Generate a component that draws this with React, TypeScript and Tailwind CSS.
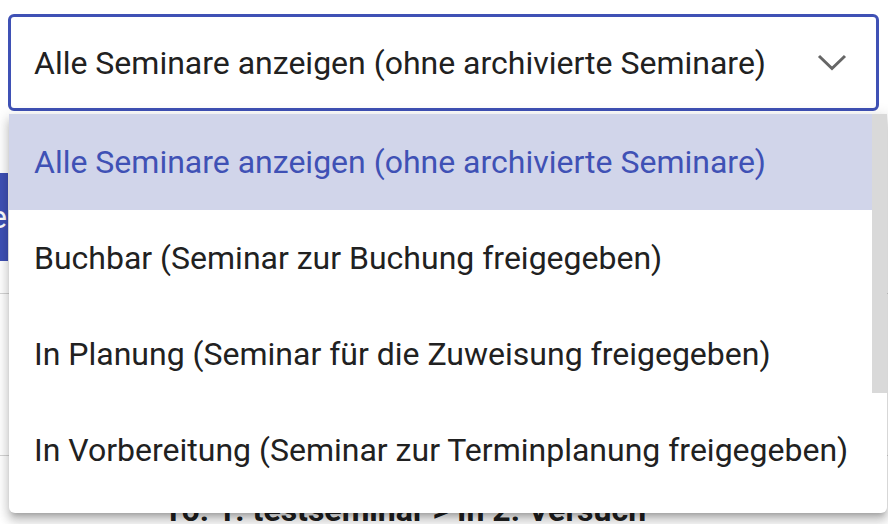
import React from 'react';

const options = [
  'Alle Seminare anzeigen (ohne archivierte Seminare)',
  'Buchbar (Seminar zur Buchung freigegeben)',
  'In Planung (Seminar für die Zuweisung freigegeben)',
  'In Vorbereitung (Seminar zur Terminplanung freigegeben)',
];

export default function App() {
  const selected = 0;

  return (
    <div className="relative w-[888px] h-[524px] overflow-hidden bg-white font-['Roboto',sans-serif] text-[#212121]">
      {/* select field */}
      <div className="pt-[14px] pl-[8px] pr-[9px]">
        <div className="h-[97px] border-[3px] border-[#3f51b5] rounded-[6px] flex items-center justify-between pl-[23px] pr-[29px]">
          <span className="text-[32px] leading-none">{options[selected]}</span>
          <svg width="30" height="17" viewBox="0 0 30 17" fill="none">
            <polyline points="2,2 15,14.5 28,2" stroke="#666666" strokeWidth="3" />
          </svg>
        </div>
      </div>

      {/* page content behind the menu */}
      <div className="mt-[62px] flex">
        <div className="h-[88px] w-[8px] overflow-hidden bg-[#3f51b5] text-white text-[32px] flex items-center">
          <span className="-ml-[10px]">e</span>
        </div>
      </div>
      <div className="mt-[32px] h-px bg-[#d4d4d4]" />
      <div className="mt-[161px] h-px bg-[#d4d4d4]" />
      <div className="mt-[38px] pl-[163px] text-[32px] leading-[32px] font-bold">
        16. 1. testseminar &gt; In 2. Versuch
      </div>

      {/* dropdown menu */}
      <div className="absolute left-[9px] top-[114px] right-[1px] h-[399px] bg-white rounded-b-[6px] flex shadow-[0_5px_5px_-3px_rgba(0,0,0,0.2),0_8px_10px_1px_rgba(0,0,0,0.14),0_3px_14px_2px_rgba(0,0,0,0.12)]">
        <div className="flex-1 flex flex-col">
          {options.map((o, i) => (
            <div
              key={o}
              className={`h-[96px] shrink-0 flex items-center pl-[25px] text-[32px] leading-none ${
                i === selected ? 'bg-[#d1d5ea] text-[#3f51b5]' : 'text-[#212121]'
              }`}
            >
              {o}
            </div>
          ))}
        </div>
        <div className="w-[15px] shrink-0">
          <div className="h-[279px] bg-[#d9d9d9]" />
        </div>
      </div>
    </div>
  );
}
